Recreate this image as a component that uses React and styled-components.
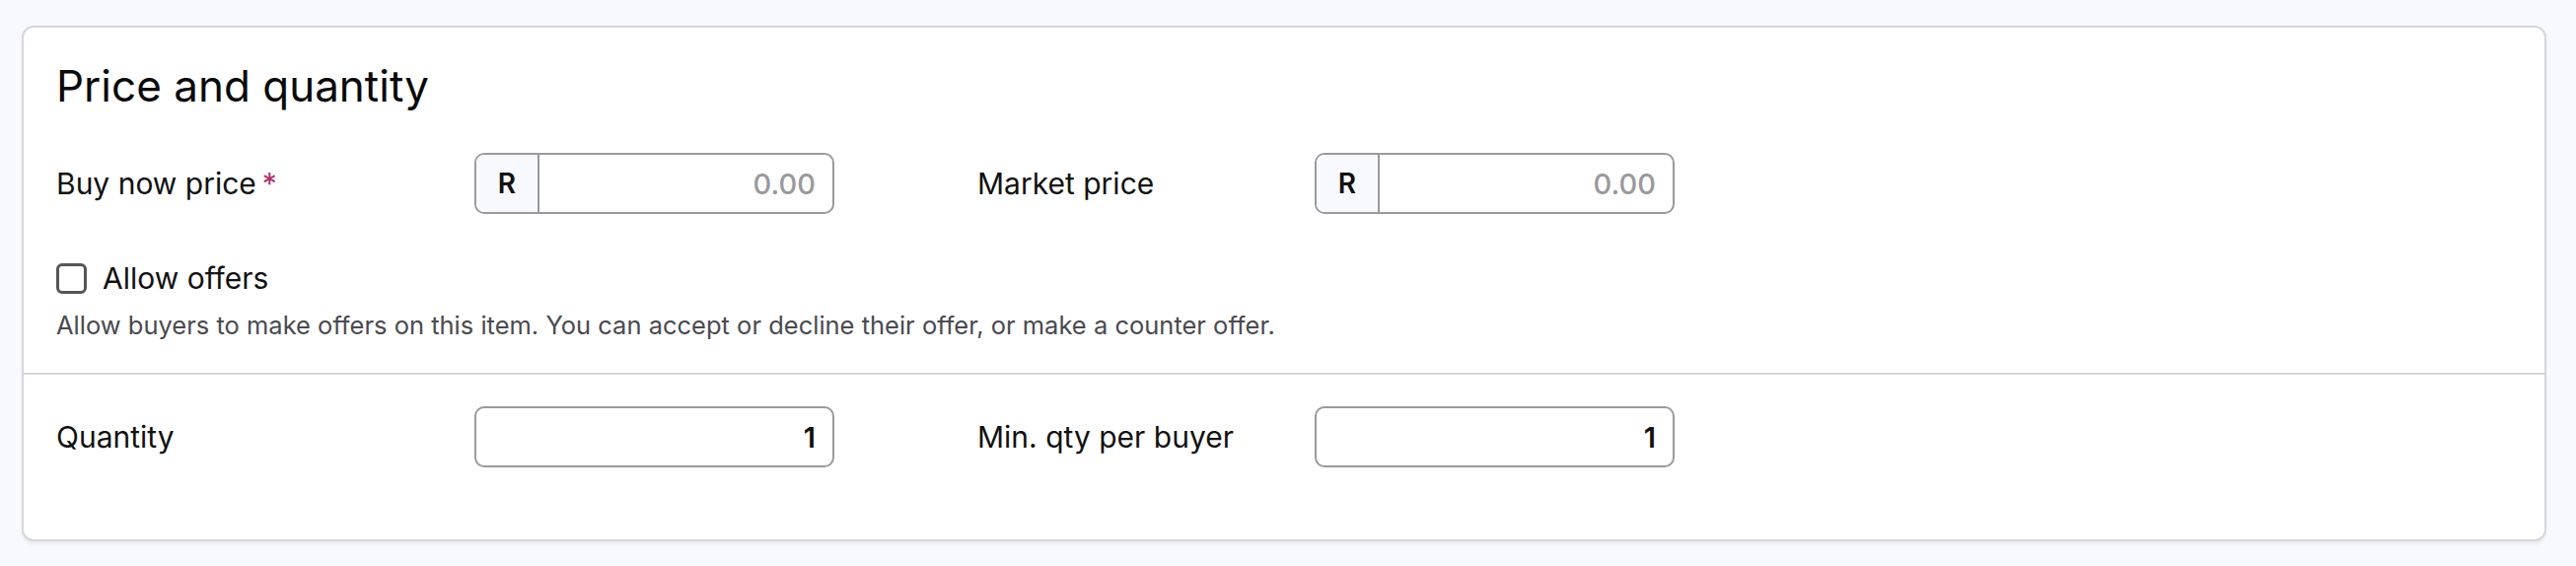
import React from 'react';
import styled, { createGlobalStyle } from 'styled-components';

const GlobalStyle = createGlobalStyle`
  html, body {
    margin: 0;
    padding: 0;
    background: #f8f9fe;
  }
  body {
    font-family: Inter, "Noto Sans", "Liberation Sans", sans-serif;
    color: #111;
  }
`;

const Page = styled.div`
  padding: 26px 30px 24px 22px;
`;

const Card = styled.section`
  background: #fff;
  border: 2px solid #d6d6da;
  border-radius: 12px;
  box-shadow: 0 3px 3px rgba(0, 0, 0, 0.05);
  height: 523px;
  box-sizing: border-box;
`;

const Block = styled.div`
  padding: ${(p) => p.padding || '0 33px'};
`;

const Title = styled.h2`
  margin: 0;
  padding-top: 33px;
  font-size: 44px;
  font-weight: 400;
  line-height: 52px;
  color: #0a0a0a;
`;

const FieldRow = styled.div`
  display: grid;
  grid-template-columns: 424px 365px 145px 342px 365px;
  align-items: center;
  height: 62px;
`;

const Label = styled.label`
  font-size: 30px;
  color: #111;
`;

const Required = styled.span`
  color: #b0306a;
  margin-left: 6px;
`;

const InputBox = styled.div`
  display: flex;
  height: 62px;
  box-sizing: border-box;
  border: 2px solid #9a9a9e;
  border-radius: 10px;
  overflow: hidden;
  background: #fff;
`;

const Prefix = styled.span`
  width: 62px;
  flex: none;
  display: flex;
  align-items: center;
  justify-content: center;
  background: #f8f9fe;
  border-right: 2px solid #9a9a9e;
  font-size: 28px;
  font-weight: 600;
  color: #111;
`;

const Value = styled.span`
  flex: 1;
  display: flex;
  align-items: center;
  justify-content: flex-end;
  padding-right: 17px;
  font-size: 29px;
  color: ${(p) => (p.placeholder ? '#99999c' : '#111')};
  font-weight: ${(p) => (p.placeholder ? 500 : 600)};
`;

const CheckRow = styled.label`
  display: flex;
  align-items: center;
  gap: 16px;
  font-size: 30px;
  line-height: 36px;
  color: #111;
`;

const Box = styled.span`
  width: 31px;
  height: 31px;
  box-sizing: border-box;
  border: 3px solid #55555a;
  border-radius: 6px;
`;

const Help = styled.p`
  margin: 0;
  font-size: 25.5px;
  color: #4a4a4f;
  line-height: 32px;
`;

const Divider = styled.hr`
  margin: 0;
  border: none;
  border-top: 2px solid #d6d6da;
`;

const PriceInput = ({ value }) => (
  <InputBox>
    <Prefix>R</Prefix>
    <Value placeholder>{value}</Value>
  </InputBox>
);

const QtyInput = ({ value }) => (
  <InputBox>
    <Value>{value}</Value>
  </InputBox>
);

export default function App() {
  return (
    <>
      <GlobalStyle />
      <Page>
        <Card>
          <Block>
            <Title>Price and quantity</Title>
          </Block>
          <Block padding="42px 33px 0">
            <FieldRow>
              <Label>
                Buy now price<Required>*</Required>
              </Label>
              <PriceInput value="0.00" />
              <span />
              <Label>Market price</Label>
              <PriceInput value="0.00" />
            </FieldRow>
          </Block>
          <Block padding="47px 33px 0">
            <CheckRow>
              <Box />
              Allow offers
            </CheckRow>
          </Block>
          <Block padding="14px 33px 32px">
            <Help>
              Allow buyers to make offers on this item. You can accept or decline their offer, or make a
              counter offer.
            </Help>
          </Block>
          <Divider />
          <Block padding="32px 33px 0">
            <FieldRow>
              <Label>Quantity</Label>
              <QtyInput value="1" />
              <span />
              <Label>Min. qty per buyer</Label>
              <QtyInput value="1" />
            </FieldRow>
          </Block>
        </Card>
      </Page>
    </>
  );
}
